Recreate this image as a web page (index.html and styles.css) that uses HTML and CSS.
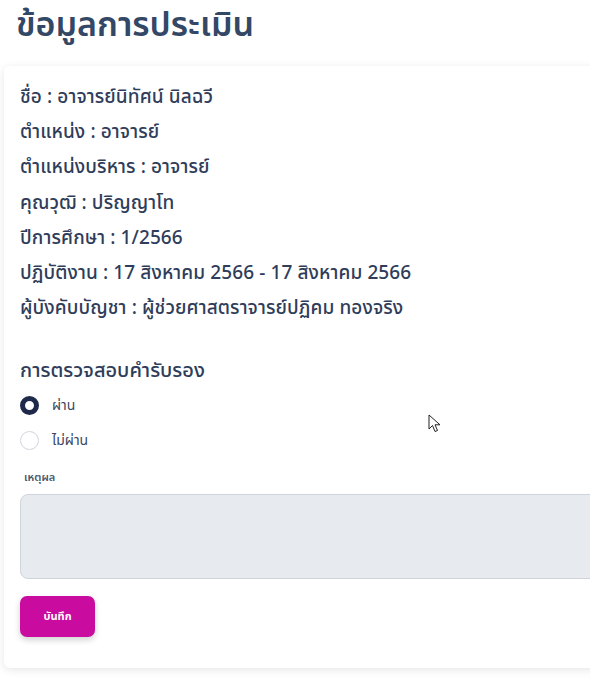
FILE: index.html
```html
<!DOCTYPE html>
<html lang="th">
<head>
<meta charset="utf-8">
<link rel="stylesheet" href="styles.css">
</head>
<body>
<h1 class="title">ข้อมูลการประเมิน</h1>
<section class="card">
  <div class="info">
    <p>ชื่อ : อาจารย์นิทัศน์ นิลฉวี</p>
    <p>ตำแหน่ง : อาจารย์</p>
    <p>ตำแหน่งบริหาร : อาจารย์</p>
    <p>คุณวุฒิ : ปริญญาโท</p>
    <p>ปีการศึกษา : 1/2566</p>
    <p>ปฏิบัติงาน : 17 สิงหาคม 2566 - 17 สิงหาคม 2566</p>
    <p>ผู้บังคับบัญชา : ผู้ช่วยศาสตราจารย์ปฏิคม ทองจริง</p>
  </div>
  <h2 class="subtitle">การตรวจสอบคำรับรอง</h2>
  <div class="radios">
    <label class="radio"><span class="dot checked"></span>ผ่าน</label>
    <label class="radio"><span class="dot"></span>ไม่ผ่าน</label>
  </div>
  <div class="field">
    <span class="label">เหตุผล</span>
    <div class="textarea"></div>
  </div>
  <button class="save">บันทึก</button>
</section>
<svg class="cursor" width="14" height="20" viewBox="0 0 14 20"><path d="M1 1 L1 15 L4.5 11.5 L7 17.5 L9.5 16.5 L7 10.8 L12 10.8 Z" fill="#fff" stroke="#222" stroke-width="1"/></svg>
</body>
</html>
```
FILE: styles.css
```css
html, body { margin: 0; padding: 0; background: #fff; }
body {
  font-family: "Noto Sans Thai", "Noto Sans", "Open Sans", sans-serif;
  color: #2f3d5a;
  width: 590px;
  height: 678px;
  overflow: hidden;
  position: relative;
}
.title {
  margin: 0;
  padding: 3px 0 0 16px;
  height: 63px;
  font-size: 34px;
  font-weight: 600;
  line-height: 46px;
  color: #334766;
}
.card {
  margin-left: 4px;
  width: 620px;
  height: 602px;
  box-sizing: border-box;
  background: #fff;
  border-radius: 6px;
  box-shadow: 0 2px 8px rgba(0,0,0,0.10);
  padding: 14px 16px 0 16px;
}
.info p {
  margin: 0;
  font-size: 19px;
  font-weight: 500;
  line-height: 35.2px;
  height: 35.2px;
  letter-spacing: 0.1px;
}
.subtitle {
  margin: 30px 0 0 0;
  font-size: 20px;
  font-weight: 500;
  line-height: 30px;
}
.radios { display: flex; flex-direction: column; gap: 10px; margin-top: 7px; }
.radio {
  display: flex;
  align-items: center;
  gap: 13px;
  font-size: 14px;
  color: #3b4760;
  height: 25px;
}
.dot {
  width: 19px; height: 19px;
  box-sizing: border-box;
  border-radius: 50%;
  border: 1px solid #cfd5dd;
  background: #fff;
}
.dot.checked {
  border: 5px solid #1f2a4a;
  background: #fff;
}
.field { margin-top: 17px; }
.label {
  display: block;
  font-size: 11px;
  font-weight: 600;
  color: #4a5568;
  margin-left: 4px;
  line-height: 16px;
}
.textarea {
  margin-top: 8px;
  height: 85px;
  background: #e7eaee;
  border: 1px solid #cfd4db;
  border-radius: 8px;
  box-sizing: border-box;
}
.save {
  margin-top: 17px;
  width: 75px;
  height: 41px;
  border: 0;
  border-radius: 7px;
  background: #c90ba0;
  color: #fff;
  font-family: inherit;
  font-size: 11px;
  font-weight: 700;
  box-shadow: 0 3px 6px rgba(0,0,0,0.18);
}
.cursor { position: absolute; left: 428px; top: 414px; }
```
